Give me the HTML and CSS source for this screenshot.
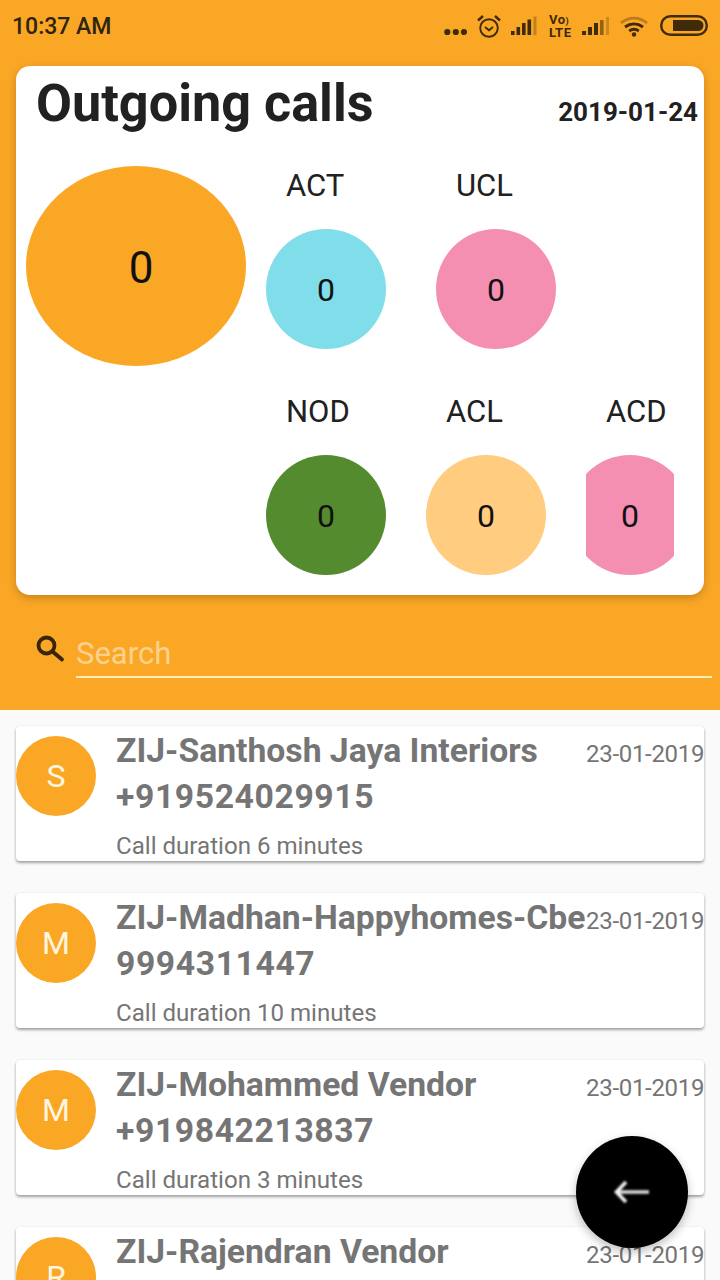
FILE: index.html
```html
<!DOCTYPE html>
<html lang="en">
<head>
<meta charset="utf-8">
<title>Outgoing calls</title>
<link rel="stylesheet" href="styles.css">
</head>
<body>
<div class="screen">
  <header class="top">
    <div class="status">
      <span class="time">10:37 AM</span>
      <div class="status-icons">
        <svg class="ic-dots" width="23" height="8" viewBox="0 0 23 8"><circle cx="3.300" cy="4" r="3.100"/><circle cx="11.800" cy="4" r="3.100"/><circle cx="20" cy="4" r="3.100"/></svg>
        <svg class="ic-alarm" width="24" height="24" viewBox="0 0 24 24"><circle cx="12" cy="14" r="8.800" fill="none" stroke-width="1.900"/><path d="M8 13l4 3.200 4-3.200" fill="none" stroke-width="1.900"/><path d="M1 6.500L6 2M23 6.500L18 2" fill="none" stroke-width="2.400"/></svg>
        <svg width="27" height="20" viewBox="0 0 27 20"><rect x="0" y="15" width="3.600" height="4"/><rect x="5.500" y="11" width="3.600" height="8"/><rect x="11" y="7" width="3.600" height="12"/><rect x="16.500" y="3.500" width="3.600" height="15.500"/><rect x="22.500" y="0.500" width="3" height="18.500" opacity=".3"/></svg>
        <div class="volte"><span>Vo<small>)</small></span><span>LTE</span></div>
        <svg width="28" height="20" viewBox="0 0 28 20"><rect x="0" y="15" width="4" height="4"/><rect x="6" y="11" width="4" height="8"/><rect x="12" y="7" width="4" height="12"/><rect x="18" y="4" width="3.600" height="15" opacity=".55"/><rect x="24" y="1" width="3" height="18" opacity=".25"/></svg>
        <svg class="ic-wifi" width="28" height="21" viewBox="0 0 28 21"><path d="M1 7C9 .5 19 .5 27 7" fill="none" stroke-width="2.600" opacity=".35"/><path d="M5 11C10.500 7 17.500 7 23 11" fill="none" stroke-width="2.800"/><path d="M9.200 15C12 13 16 13 18.800 15" fill="none" stroke-width="2.800"/><circle cx="14" cy="18.500" r="2.200"/></svg>
        <svg class="ic-battery" width="50" height="21" viewBox="0 0 50 21"><rect x="3.200" y="1.200" width="45.600" height="18.600" rx="9.300" fill="none" stroke-width="2.400"/><path d="M15 5h25a5.500 5.500 0 0 1 0 11H15z"/></svg>
      </div>
    </div>

    <section class="summary">
      <div class="summary-head">
        <h1>Outgoing calls</h1>
        <span class="summary-date">2019-01-24</span>
      </div>
      <div class="summary-body">
        <div class="total">0</div>
        <div class="stats">
          <div class="stat-row">
            <div class="stat stat-act"><span class="stat-label">ACT</span><div class="stat-clip"><div class="dot dot-cyan">0</div></div></div>
            <div class="stat stat-ucl"><span class="stat-label">UCL</span><div class="stat-clip"><div class="dot dot-pink">0</div></div></div>
          </div>
          <div class="stat-row">
            <div class="stat stat-nod"><span class="stat-label">NOD</span><div class="stat-clip"><div class="dot dot-green">0</div></div></div>
            <div class="stat stat-acl"><span class="stat-label">ACL</span><div class="stat-clip"><div class="dot dot-sand">0</div></div></div>
            <div class="stat stat-acd"><span class="stat-label">ACD</span><div class="stat-clip stat-clip-narrow"><div class="dot dot-pink">0</div></div></div>
          </div>
        </div>
      </div>
    </section>

    <div class="search">
      <svg class="search-icon" width="30" height="28" viewBox="0 0 30 28"><circle cx="10.500" cy="10.500" r="8" fill="none" stroke-width="3.800"/><path d="M16.500 16.500l9.500 8" fill="none" stroke-width="3.800" stroke-linecap="round"/></svg>
      <div class="search-field">Search</div>
    </div>
  </header>

  <main class="list">
    <article class="call">
      <div class="avatar">S</div>
      <div class="call-main">
        <div class="call-name">ZIJ-Santhosh Jaya Interiors</div>
        <div class="call-name call-phone">+919524029915</div>
        <div class="call-duration">Call duration 6 minutes</div>
      </div>
      <div class="call-date">23-01-2019</div>
    </article>
    <article class="call">
      <div class="avatar">M</div>
      <div class="call-main">
        <div class="call-name">ZIJ-Madhan-Happyhomes-Cbe</div>
        <div class="call-name call-phone">9994311447</div>
        <div class="call-duration">Call duration 10 minutes</div>
      </div>
      <div class="call-date">23-01-2019</div>
    </article>
    <article class="call">
      <div class="avatar">M</div>
      <div class="call-main">
        <div class="call-name">ZIJ-Mohammed Vendor</div>
        <div class="call-name call-phone">+919842213837</div>
        <div class="call-duration">Call duration 3 minutes</div>
      </div>
      <div class="call-date">23-01-2019</div>
    </article>
    <article class="call">
      <div class="avatar">R</div>
      <div class="call-main">
        <div class="call-name">ZIJ-Rajendran Vendor</div>
        <div class="call-name call-phone">+919842213837</div>
        <div class="call-duration">Call duration 3 minutes</div>
      </div>
      <div class="call-date">23-01-2019</div>
    </article>
  </main>

  <button class="fab" type="button" aria-label="Back">
    <svg width="40" height="30" viewBox="0 0 40 30"><path d="M5 15h32" fill="none" stroke="#d8d8d8" stroke-width="3.600"/><path d="M14 5L4.500 15l9.500 10" fill="none" stroke="#f2f2f2" stroke-width="3.600"/></svg>
  </button>
</div>
</body>
</html>
```

FILE: styles.css
```css
* { box-sizing: border-box; margin: 0; padding: 0; }
html, body { width: 720px; height: 1280px; overflow: hidden; }
body { font-family: Roboto, "Liberation Sans", sans-serif; background: #fafafa; }

.screen { position: relative; width: 720px; height: 1280px; overflow: hidden; }

.top { background: #faa726; height: 710px; display: flex; flex-direction: column; }

.status { height: 52px; padding: 0 12px; display: flex; align-items: center; justify-content: space-between; }
.time { font-size: 23px; font-weight: 500; color: #2e2414; }
.status-icons { display: flex; align-items: center; gap: 10px; }
.status-icons svg { fill: #3f2a0a; stroke: #3f2a0a; stroke-width: 0; flex: none; }
.ic-dots { margin-top: 11px; }
.ic-alarm { margin-top: -1px; }
.ic-wifi { margin-top: 1px; }
.ic-battery { margin-top: -2px; }
.volte { display: flex; flex-direction: column; width: 24px; padding-left: 1px; font-size: 13px; line-height: 12px; font-weight: 700; letter-spacing: .5px; color: #3f2a0a; }
.volte small { font-size: 9px; }

.summary { margin: 14px 16px 0; height: 529px; background: #fff; border-radius: 14px; box-shadow: 0 3px 8px rgba(90, 50, 0, .3); display: flex; flex-direction: column; }
.summary-head { height: 100px; padding: 5px 6px 0 20px; display: flex; justify-content: space-between; align-items: flex-start; }
.summary-head h1 { font-size: 52.2px; line-height: 66px; font-weight: 700; color: #212121; }
.summary-date { font-size: 26px; line-height: 30px; margin-top: 26px; font-weight: 700; color: #212121; }

.summary-body { display: flex; padding-left: 10px; }
.total { width: 220px; height: 200px; flex: none; border-radius: 50%; background: #faa726; display: flex; align-items: center; justify-content: center; padding: 4px 0 0 10px; font-size: 44px; color: #111; }
.stats { display: flex; flex-direction: column; margin-left: 20px; gap: 43px; }
.stat-row { display: flex; height: 183px; }
.stat { display: flex; flex-direction: column; }
.stat-label { height: 63px; flex: none; font-size: 31px; line-height: 40px; color: #212121; padding-left: 20px; }
.stat-act { width: 170px; }
.stat-nod { width: 160px; }
.stat-acl { width: 160px; }
.stat-clip { width: 120px; height: 120px; flex: none; display: flex; justify-content: center; overflow: hidden; }
.stat-clip-narrow { width: 88px; }
.dot { width: 120px; height: 120px; flex: none; border-radius: 50%; display: flex; align-items: center; justify-content: center; font-size: 32px; color: #111; padding-top: 2px; }
.dot-cyan { background: #80deea; }
.dot-pink { background: #f48fb1; }
.dot-green { background: #558b2f; }
.dot-sand { background: #ffcc80; }

.search { flex: 1; display: flex; align-items: flex-start; padding: 31px 8px 0 36px; }
.search-icon { fill: none; stroke: #3a2508; flex: none; margin: 9px 10px 0 0; }
.search-field { flex: 1; height: 52px; border-bottom: 2px solid #ffeeb5; font-size: 31px; line-height: 44px; padding-top: 6px; color: #fdd28f; }

.list { height: 570px; padding: 16px 16px 0; display: flex; flex-direction: column; gap: 32px; overflow: hidden; }
.call { height: 135px; flex: none; background: #fff; border-radius: 4px; box-shadow: 0 2px 3px rgba(0, 0, 0, .35), 0 0 2px rgba(0, 0, 0, .08); display: flex; overflow: hidden; }
.avatar { width: 80px; height: 80px; flex: none; margin-top: 10px; border-radius: 50%; background: #faa726; color: #fff6e0; display: flex; align-items: center; justify-content: center; font-size: 32px; }
.call-main { flex: 1; min-width: 0; padding: 2px 0 0 20px; }
.call-name { font-size: 33.7px; line-height: 46px; font-weight: 700; color: #757575; white-space: nowrap; }
.call-phone { letter-spacing: .6px; }
.call-duration { font-size: 24.1px; line-height: 30px; margin-top: 11px; color: #757575; white-space: nowrap; }
.call-date { flex: none; width: 118px; font-size: 24px; letter-spacing: -.3px; line-height: 30px; margin-top: 13px; color: #757575; white-space: nowrap; }

.fab { position: absolute; left: 576px; top: 1136px; width: 112px; height: 112px; border: 0; border-radius: 50%; background: #000; display: flex; align-items: center; justify-content: center; box-shadow: 0 4px 10px rgba(0, 0, 0, .25); }
.fab svg { filter: blur(.8px); }
```
